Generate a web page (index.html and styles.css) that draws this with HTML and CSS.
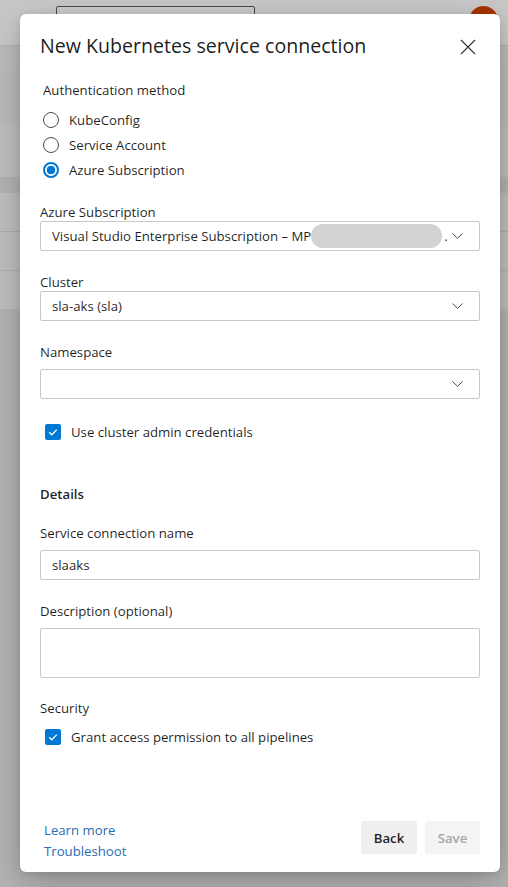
FILE: index.html
```html
<!DOCTYPE html>
<html lang="en">
<head>
<meta charset="utf-8">
<title>New Kubernetes service connection</title>
<link rel="stylesheet" href="styles.css">
</head>
<body>
<div class="page">
  <header class="topbar">
    <div class="search"></div>
    <div class="avatar"></div>
  </header>
  <main class="bg-content">
    <div class="bg-band"></div>
    <div class="bg-card bg-card-1"></div>
    <div class="bg-card bg-card-2">
      <div class="bg-row"></div>
      <div class="bg-row"></div>
      <div class="bg-row"></div>
    </div>
  </main>
</div>

<div class="dialog" role="dialog">
  <div class="dialog-header">
    <h1 class="title">New Kubernetes service connection</h1>
    <button class="close" aria-label="Close">
      <svg width="16" height="16" viewBox="0 0 16 16"><path d="M1 1 L15 15 M15 1 L1 15" stroke="#333" stroke-width="1.1" fill="none"/></svg>
    </button>
  </div>

  <div class="auth">
    <div class="auth-label">Authentication method</div>
    <div class="radio-list">
      <div class="radio"><span class="radio-circle"></span><span>KubeConfig</span></div>
      <div class="radio"><span class="radio-circle"></span><span>Service Account</span></div>
      <div class="radio"><span class="radio-circle checked"></span><span>Azure Subscription</span></div>
    </div>
  </div>

  <div class="field f-sub">
    <div class="label">Azure Subscription</div>
    <div class="dropdown">
      <span class="dd-text">Visual Studio Enterprise Subscription – MP</span><span class="redact"></span><span class="dd-dot">.</span>
      <svg class="chev" width="11" height="6" viewBox="0 0 11 6"><path d="M0.5 0.5 L5.5 5.3 L10.5 0.5" stroke="#444" stroke-width="1" fill="none"/></svg>
    </div>
  </div>

  <div class="field f-gap">
    <div class="label">Cluster</div>
    <div class="dropdown">
      <span class="dd-text">sla-aks (sla)</span>
      <svg class="chev" width="11" height="6" viewBox="0 0 11 6"><path d="M0.5 0.5 L5.5 5.3 L10.5 0.5" stroke="#444" stroke-width="1" fill="none"/></svg>
    </div>
  </div>

  <div class="field f-gap f-wide">
    <div class="label">Namespace</div>
    <div class="dropdown">
      <span class="dd-text"></span>
      <svg class="chev" width="11" height="6" viewBox="0 0 11 6"><path d="M0.5 0.5 L5.5 5.3 L10.5 0.5" stroke="#444" stroke-width="1" fill="none"/></svg>
    </div>
  </div>

  <div class="check-row c-admin">
    <svg class="check" width="16" height="16" viewBox="0 0 16 16"><rect width="16" height="16" rx="2" fill="#0078d4"/><path d="M4.2 8.3 L6.8 10.8 L11.8 5.6" stroke="#fff" stroke-width="1.3" fill="none"/></svg>
    <span>Use cluster admin credentials</span>
  </div>

  <div class="section-title">Details</div>

  <div class="field f-name f-wide">
    <div class="label">Service connection name</div>
    <div class="input">slaaks</div>
  </div>

  <div class="field f-gap f-wide">
    <div class="label">Description (optional)</div>
    <div class="textarea"></div>
  </div>

  <div class="label security">Security</div>
  <div class="check-row c-grant">
    <svg class="check" width="16" height="16" viewBox="0 0 16 16"><rect width="16" height="16" rx="2" fill="#0078d4"/><path d="M4.2 8.3 L6.8 10.8 L11.8 5.6" stroke="#fff" stroke-width="1.3" fill="none"/></svg>
    <span>Grant access permission to all pipelines</span>
  </div>

  <footer class="footer">
    <div class="links">
      <a class="link">Learn more</a>
      <a class="link">Troubleshoot</a>
    </div>
    <div class="buttons">
      <button class="btn">Back</button>
      <button class="btn disabled">Save</button>
    </div>
  </footer>
</div>
</body>
</html>
```

FILE: styles.css
```css
html, body {
  margin: 0;
  padding: 0;
}

body {
  width: 508px;
  height: 887px;
  overflow: hidden;
  position: relative;
  background: #b5b5b5;
  font-family: "Open Sans", "Noto Sans", sans-serif;
}

/* dimmed background page */
.topbar {
  height: 46px;
  background: #c8c8c8;
  border-bottom: 1px solid #b2b2b2;
  display: flex;
  align-items: flex-start;
  padding: 6px 10px 0 56px;
  box-sizing: border-box;
}

.search {
  width: 199px;
  height: 30px;
  border: 1px solid #4a4a4a;
  border-radius: 2px;
  box-sizing: border-box;
  background: #cbcbcb;
}

.avatar {
  margin-left: auto;
  width: 29px;
  height: 29px;
  border-radius: 50%;
  background: #a83300;
}

.bg-band {
  height: 80px;
  background: #bdbdbd;
}

.bg-card {
  background: #c1c1c1;
}

.bg-card-1 {
  height: 51px;
  margin-bottom: 16px;
}

.bg-row {
  height: 38px;
  border-bottom: 1px solid #b0b0b0;
}

.bg-row:last-child {
  border-bottom: none;
}

/* dialog */
.dialog {
  position: absolute;
  top: 14px;
  left: 20px;
  width: 480px;
  height: 858px;
  box-sizing: border-box;
  background: #fff;
  border-radius: 6px;
  box-shadow: 0 14px 40px rgba(0, 0, 0, 0.22), 0 2px 10px rgba(0, 0, 0, 0.12);
  display: flex;
  flex-direction: column;
  padding: 18px 20px 10px;
  color: rgba(0, 0, 0, 0.88);
  font-size: 13.2px;
}

.dialog-header {
  display: flex;
  align-items: center;
  justify-content: space-between;
  height: 28px;
}

.title {
  margin: 0;
  font-size: 19.6px;
  font-weight: 400;
  line-height: 28px;
  color: rgba(0, 0, 0, 0.9);
}

.close {
  border: none;
  background: none;
  padding: 0;
  margin: 2px 4px 0 0;
  width: 16px;
  height: 16px;
  display: flex;
}

.auth {
  margin-top: 20px;
  padding-left: 3px;
}

.auth-label {
  line-height: 20px;
}

.radio-list {
  margin-top: 7px;
}

.radio {
  height: 25px;
  display: flex;
  align-items: center;
  gap: 10px;
}

.radio-circle {
  width: 16px;
  height: 16px;
  box-sizing: border-box;
  border: 1px solid #4d4d4d;
  border-radius: 50%;
  flex: none;
}

.radio-circle.checked {
  border: 2px solid #0078d4;
  background: radial-gradient(circle, #0078d4 0 4px, #fff 4.6px);
}

.field {
  display: flex;
  flex-direction: column;
}

.label {
  line-height: 18px;
}

.f-sub {
  margin-top: 21px;
}

.f-gap {
  margin-top: 22px;
}

.f-wide .label {
  margin-bottom: 8px;
}

.f-name {
  margin-top: 21px;
}

.dropdown,
.input {
  height: 30px;
  box-sizing: border-box;
  border: 1px solid #c8c8c8;
  border-radius: 2px;
  display: flex;
  align-items: center;
  padding: 0 16px 0 11px;
  white-space: nowrap;
}

.dd-text {
  flex: none;
}

.redact {
  width: 131px;
  height: 24px;
  border-radius: 12px;
  background: #d3d3d3;
  flex: none;
}

.dd-dot {
  margin-left: 2px;
}

.chev {
  margin-left: auto;
  flex: none;
}

.textarea {
  height: 50px;
  box-sizing: border-box;
  border: 1px solid #c8c8c8;
  border-radius: 2px;
}

.check-row {
  display: flex;
  align-items: center;
  gap: 10px;
  height: 20px;
  padding-left: 5px;
}

.check {
  flex: none;
}

.c-admin {
  margin-top: 23px;
}

.section-title {
  margin-top: 43px;
  line-height: 18px;
  font-weight: 600;
}

.security {
  margin-top: 21px;
}

.c-grant {
  margin-top: 10px;
}

.footer {
  margin-top: auto;
  display: flex;
  justify-content: space-between;
  align-items: flex-start;
}

.links {
  display: flex;
  flex-direction: column;
  padding-left: 4px;
}

.link {
  color: #2a6db2;
  line-height: 21px;
}

.buttons {
  display: flex;
  gap: 8px;
  margin-top: 1px;
}

.btn {
  height: 33px;
  border: none;
  border-radius: 2px;
  background: #efefef;
  font-family: inherit;
  font-size: 13.2px;
  font-weight: 600;
  color: rgba(0, 0, 0, 0.88);
  padding: 0;
  width: 56px;
}

.btn.disabled {
  width: 55px;
  background: #f4f4f4;
  color: #a6a6a6;
}
```
